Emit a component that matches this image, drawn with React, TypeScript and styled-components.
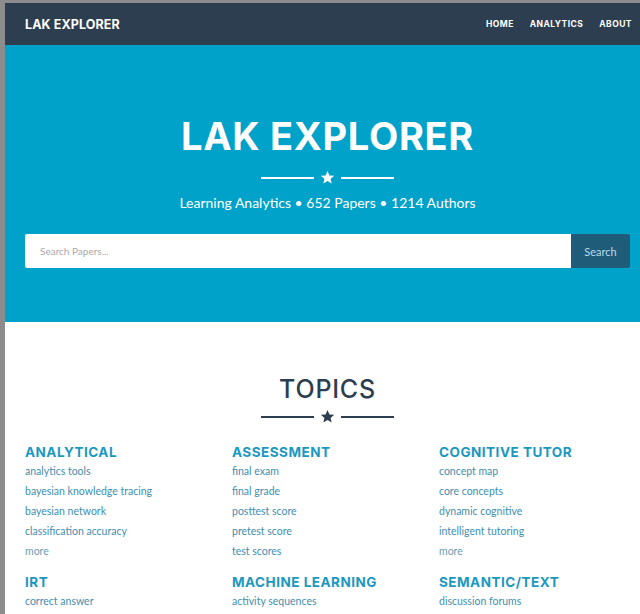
import React from "react";
import styled, { createGlobalStyle } from "styled-components";

const Global = createGlobalStyle`
  html, body {
    margin: 0;
    padding: 0;
    background: #8c8c8c;
    overflow: hidden;
  }
  body {
    padding: 3px 0 0 5px;
    font-family: "Lato", "Liberation Sans", sans-serif;
  }
`;

const Page = styled.div`
  width: 645px;
  background: #ffffff;
  min-height: 620px;
`;

const NavBar = styled.nav`
  height: 42px;
  background: #2c3e50;
  display: flex;
  align-items: center;
  justify-content: space-between;
  padding: 0 18px 0 20px;
`;

const Brand = styled.div`
  font-family: "Inter", "DejaVu Sans", sans-serif;
  font-weight: 700;
  font-size: 12.5px;
  color: #ffffff;
  letter-spacing: 0.1px;
`;

const NavLinks = styled.div`
  display: flex;
  gap: 16px;
`;

const NavLink = styled.a`
  font-family: "Inter", "DejaVu Sans", sans-serif;
  font-weight: 700;
  font-size: 8.5px;
  letter-spacing: 0.45px;
  color: #ffffff;
  text-decoration: none;
`;

const Hero = styled.header`
  background: #00a2ca;
  height: 277px;
  display: flex;
  flex-direction: column;
  align-items: center;
  padding: 0 20px;
  box-sizing: border-box;
`;

const HeroTitle = styled.h1`
  margin: 71px 0 0;
  font-family: "Inter", "DejaVu Sans", sans-serif;
  font-weight: 700;
  font-size: 38px;
  line-height: 40px;
  letter-spacing: 0.7px;
  color: #ffffff;
`;

const Divider = styled.div<{ $color: string; $top: number }>`
  display: flex;
  align-items: center;
  gap: 6px;
  margin-top: ${(p) => p.$top}px;
  color: ${(p) => p.$color};
`;

const Rule = styled.span`
  display: block;
  width: 53px;
  height: 2px;
  background: currentColor;
`;

const Subtitle = styled.p`
  margin: 9px 0 0;
  font-size: 14px;
  line-height: 18px;
  color: #ffffff;
`;

const SearchRow = styled.form`
  align-self: stretch;
  display: flex;
  margin-top: 22px;
  height: 34px;
`;

const SearchInput = styled.input`
  flex: 1;
  border: none;
  border-radius: 2px 0 0 2px;
  padding: 0 15px;
  font-family: "Lato", sans-serif;
  font-size: 10px;
  color: #333;
  outline: none;
  &::placeholder {
    color: #a9a9a9;
  }
`;

const SearchButton = styled.button`
  width: 59px;
  border: none;
  border-radius: 0 2px 2px 0;
  background: #1f5c7a;
  color: #b9dbe8;
  font-family: "Lato", sans-serif;
  font-size: 11px;
`;

const TopicsSection = styled.section`
  padding: 52px 20px 0;
  display: flex;
  flex-direction: column;
  align-items: center;
`;

const TopicsTitle = styled.h2`
  margin: 0;
  font-family: "Inter", "DejaVu Sans", sans-serif;
  font-weight: 500;
  font-size: 25px;
  line-height: 30px;
  letter-spacing: 0.8px;
  color: #2c3e50;
`;

const TopicGrid = styled.div`
  align-self: stretch;
  display: grid;
  grid-template-columns: repeat(3, 207px);
  margin-top: 19px;
  row-gap: 12px;
`;

const TopicCard = styled.div`
  display: flex;
  flex-direction: column;
`;

const TopicHeading = styled.h3`
  margin: 0;
  font-family: "Inter", "DejaVu Sans", sans-serif;
  font-weight: 700;
  font-size: 13.5px;
  line-height: 18px;
  letter-spacing: 0.5px;
  color: #1b98c0;
`;

const TopicLink = styled.a<{ $muted?: boolean }>`
  font-size: 10.5px;
  line-height: 20px;
  color: ${(p) => (p.$muted ? "#6b9db3" : "#3f8eb0")};
  text-decoration: none;
`;

const Star = ({ size }: { size: number }) => (
  <svg width={size} height={size} viewBox="0 0 24 24" fill="currentColor">
    <path d="M12 1.5l3.1 7.1 7.6.6-5.8 5 1.8 7.5L12 17.7l-6.7 4 1.8-7.5-5.8-5 7.6-.6z" />
  </svg>
);

const topics: { name: string; items: string[]; more?: boolean }[] = [
  {
    name: "ANALYTICAL",
    items: [
      "analytics tools",
      "bayesian knowledge tracing",
      "bayesian network",
      "classification accuracy",
    ],
    more: true,
  },
  {
    name: "ASSESSMENT",
    items: ["final exam", "final grade", "posttest score", "pretest score", "test scores"],
  },
  {
    name: "COGNITIVE TUTOR",
    items: ["concept map", "core concepts", "dynamic cognitive", "intelligent tutoring"],
    more: true,
  },
  { name: "IRT", items: ["correct answer"] },
  { name: "MACHINE LEARNING", items: ["activity sequences"] },
  { name: "SEMANTIC/TEXT", items: ["discussion forums"] },
];

export default function App() {
  return (
    <>
      <Global />
      <Page>
        <NavBar>
          <Brand>LAK EXPLORER</Brand>
          <NavLinks>
            <NavLink href="#">HOME</NavLink>
            <NavLink href="#">ANALYTICS</NavLink>
            <NavLink href="#">ABOUT</NavLink>
          </NavLinks>
        </NavBar>
        <Hero>
          <HeroTitle>LAK EXPLORER</HeroTitle>
          <Divider $color="#ffffff" $top={14}>
            <Rule />
            <Star size={15} />
            <Rule />
          </Divider>
          <Subtitle>Learning Analytics • 652 Papers • 1214 Authors</Subtitle>
          <SearchRow onSubmit={(e) => e.preventDefault()}>
            <SearchInput placeholder="Search Papers..." />
            <SearchButton type="submit">Search</SearchButton>
          </SearchRow>
        </Hero>
        <TopicsSection>
          <TopicsTitle>TOPICS</TopicsTitle>
          <Divider $color="#2c3e50" $top={5}>
            <Rule />
            <Star size={15} />
            <Rule />
          </Divider>
          <TopicGrid>
            {topics.map((t) => (
              <TopicCard key={t.name}>
                <TopicHeading>{t.name}</TopicHeading>
                {t.items.map((i) => (
                  <TopicLink key={i} href="#">
                    {i}
                  </TopicLink>
                ))}
                {t.more && (
                  <TopicLink $muted href="#">
                    more
                  </TopicLink>
                )}
              </TopicCard>
            ))}
          </TopicGrid>
        </TopicsSection>
      </Page>
    </>
  );
}
